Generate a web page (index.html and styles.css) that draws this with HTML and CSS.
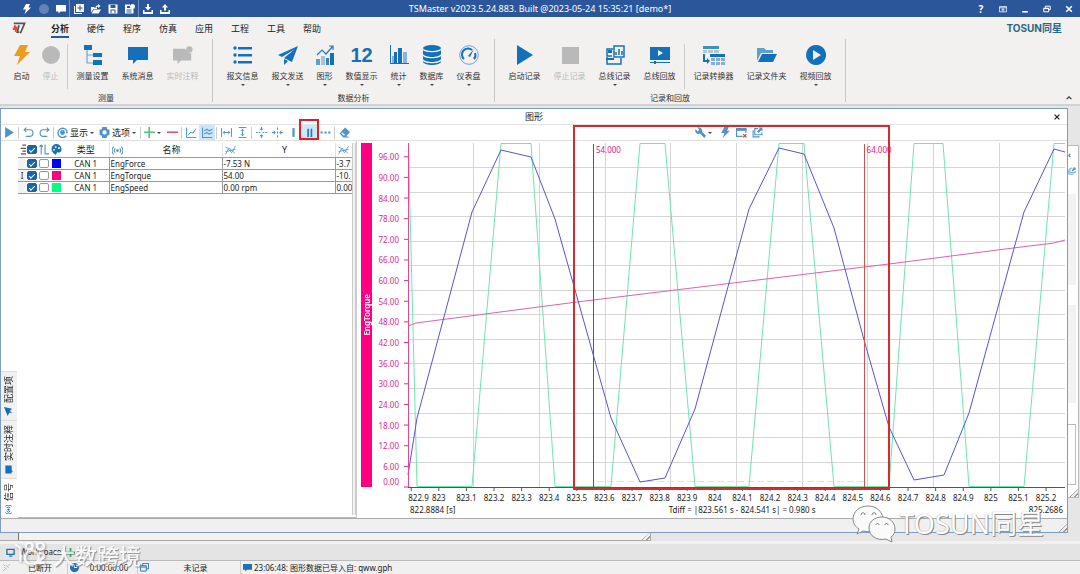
FILE: index.html
```html
<!DOCTYPE html>
<html lang="zh-CN">
<head>
<meta charset="utf-8">
<title>TSMaster</title>
<link rel="stylesheet" href="styles.css">
</head>
<body>
<svg class="defs" aria-hidden="true">
  <symbol id="bolt" viewBox="0 0 20 20"><path d="M8 0h8l-3 7h5L5 20l3-9H2z"/></symbol>
  <symbol id="chat" viewBox="0 0 20 20"><path d="M0 2h20v13H9l-4 4v-4H0z"/></symbol>
  <symbol id="play" viewBox="0 0 20 20"><path d="M2 0l16 10L2 20z"/></symbol>
  <symbol id="gear" viewBox="0 0 20 20"><path fill-rule="evenodd" d="M6 0h8l1 4 4 1v9l-4 2-1 4H6l-1-4-4-2V5l4-1zM10 6a4 4 0 1 0 .1 0z"/></symbol>
  <symbol id="popout" viewBox="0 0 20 20"><path fill="none" stroke="currentColor" stroke-width="2" d="M11 3H5v11h13v-4M2 6v12h12"/><path d="M12 1h7v7l-2-2-5 5-3-3 5-5z"/></symbol>
</svg>

<div class="app">
  <header class="titlebar">
    <div class="quick">
      <button aria-label="启动"><svg viewBox="0 0 20 20"><use href="#bolt"/></svg></button>
      <button aria-label="停止" class="dim"><svg viewBox="0 0 20 20"><circle cx="10" cy="10" r="10"/></svg></button>
      <button aria-label="消息"><svg viewBox="0 0 20 20"><use href="#chat"/></svg></button>
      <i></i>
      <button aria-label="新建"><svg viewBox="0 0 20 20"><path fill-rule="evenodd" d="M4 0h16v16H4zM11 3v4H7v2h4v4h2V9h4V7h-4V3z"/><path d="M0 4h2v14h14v2H0z"/></svg></button>
      <button aria-label="打开"><svg viewBox="0 0 20 20"><path d="M0 6h6l2 2h4v2H5l-5 7z"/><path d="M6 11h14l-5 8H1zM9 8c0-4 2-5 5-5V0l5 4-5 4V5c-2 0-3 1-3 3z"/></svg></button>
      <button aria-label="保存"><svg viewBox="0 0 20 20"><path fill-rule="evenodd" d="M1 1h18v18H1zM5 2v6h10V2zM5 11v7h2v-5h6v5h2v-7z"/></svg></button>
      <button aria-label="另存为"><svg viewBox="0 0 20 20"><path fill-rule="evenodd" d="M0 1h10v3H4v4h8l5 3v8H0zM3 11v2h10v-2zM3 15v2h10v-2z"/><circle cx="15" cy="5" r="5"/></svg></button>
      <i></i>
      <button aria-label="导入"><svg viewBox="0 0 20 20"><path d="M8 0h4v6h4l-6 7-6-7h4zM0 12h3v4h14v-4h3v8H0z"/></svg></button>
      <button aria-label="导出"><svg viewBox="0 0 20 20"><path d="M8 13h4V7h4l-6-7-6 7h4zM0 12h3v4h14v-4h3v8H0z"/></svg></button>
    </div>
    <h1>TSMaster v2023.5.24.883. Built @2023-05-24 15:35:21 [demo*]</h1>
    <div class="winctl">
      <button aria-label="帮助"><b>?</b></button>
      <button aria-label="功能区"><svg viewBox="0 0 20 20"><path fill="none" stroke="currentColor" stroke-width="2" d="M1 4h18v13H1zM1 7h18M10 8v8M6 12h8"/></svg></button>
      <button aria-label="最小化"><svg viewBox="0 0 20 20"><path d="M3 15h14v4H3z"/></svg></button>
      <button aria-label="还原"><svg viewBox="0 0 20 20"><path fill="none" stroke="currentColor" stroke-width="2.5" d="M6 7V3h12v9h-4M2 8h12v9H2zM2 9h12"/></svg></button>
      <button aria-label="关闭"><svg viewBox="0 0 20 20"><path fill="none" stroke="currentColor" stroke-width="4" d="M3 3l14 14M17 3L3 17"/></svg></button>
    </div>
  </header>

  <nav class="tabs">
    <svg class="mark" viewBox="0 0 40 34"><path fill="none" stroke="#555" stroke-width="5" d="M5 4h31L24 32M20 9l-5 20h6"/><path fill="none" stroke="#e0492e" stroke-width="5" d="M9 9L7 15h8M2 20h10l-2 8"/></svg>
    <a href="#" class="on">分析</a><a href="#">硬件</a><a href="#">程序</a><a href="#">仿真</a><a href="#">应用</a><a href="#">工程</a><a href="#">工具</a><a href="#">帮助</a>
    <span class="brand">TOSUN同星</span>
  </nav>

  <div class="ribbon">
    <section class="group g1">
      <div class="tools">
        <button class="t s"><svg class="orange" viewBox="0 0 20 20"><use href="#bolt"/></svg>启动</button>
        <button class="t s off"><svg viewBox="0 0 20 20"><circle cx="10" cy="10" r="9"/></svg>停止</button>
        <i class="bar"></i>
        <button class="t"><svg viewBox="0 0 20 20"><path d="M1 0h8v5H1zM10 8h9v4h-9zM10 15h9v5h-9z"/><path fill="none" stroke="#6aa7d2" stroke-width="1.2" d="M4 5v13h6M4 10h6"/></svg>测量设置</button>
        <button class="t"><svg viewBox="0 0 20 20"><use href="#chat"/></svg>系统消息</button>
        <button class="t off"><svg viewBox="0 0 22 20"><path d="M0 3h13l5 5h2v8H9l-4 4v-4H0z"/><circle cx="18" cy="4" r="3.5"/></svg>实时注释</button>
      </div>
      <h2>测量</h2>
    </section>
    <section class="group g2">
      <div class="tools">
        <button class="t drop"><svg viewBox="0 0 20 20"><path d="M5 2h14v2.500H5zM5 9h14v2.500H5zM5 16h14v2.500H5z"/><circle cx="2" cy="3" r="1.700"/><circle cx="2" cy="10" r="1.700"/><circle cx="2" cy="17" r="1.700"/></svg>报文信息</button>
        <button class="t drop"><svg viewBox="0 0 20 20"><path d="M20 1L0 10l4 2L17 4 6 13l8 4zM6 14v6l4-4z"/></svg>报文发送</button>
        <button class="t s drop"><svg viewBox="0 0 20 20"><path d="M15 8h4v12h-4z"/><path fill="#5aa3c4" d="M1 14h4v6H1z"/><path fill="#a5c2df" d="M6 11h4v9H6z"/><path fill="#3f80bd" d="M11 13h3v7h-3z"/><path fill="none" stroke="#2878bd" stroke-width="1.200" d="M2 10l5-5 4 4 7-8M14 1h4v4"/></svg>图形</button>
        <button class="t drop"><b class="num">12</b>数值显示</button>
        <button class="t s drop"><svg viewBox="0 0 20 20"><path d="M5 7h3v11H5zM9 3h4v15H9z"/><path fill="#87b4da" d="M14 7h4v11h-4zM3 11h2v7H3z"/><path d="M1 0h1v18h18v1H1z"/></svg>统计</button>
        <button class="t m drop"><svg viewBox="0 0 20 20"><ellipse cx="10" cy="3" rx="9" ry="3"/><path d="M1 5c2 3 16 3 18 0v4c-2 4-16 4-18 0zM1 11c2 3 16 3 18 0v3c-2 4-16 4-18 0zM1 16c2 3 16 3 18 0v1c-2 4-16 4-18 0z"/></svg>数据库</button>
        <button class="t m drop"><svg viewBox="0 0 20 20"><circle cx="10" cy="10" r="9.300" fill="none" stroke="#6ba3d3"/><path fill="none" stroke="#1470b8" stroke-width="2" d="M5 14a6 6 0 0 1 8-9M16 8a6 6 0 0 1-1 6"/><path d="M15 4l-4 8-2-1z"/></svg>仪表盘</button>
      </div>
      <h2>数据分析</h2>
    </section>
    <section class="group g3">
      <div class="tools">
        <button class="t"><svg viewBox="0 0 20 20"><use href="#play"/></svg>启动记录</button>
        <button class="t off"><svg viewBox="0 0 20 20"><path d="M2 2h17v17H2z"/></svg>停止记录</button>
        <button class="t drop"><svg viewBox="0 0 20 20"><path fill="none" stroke="#1470b8" stroke-width="1.500" d="M9 1h10v11H9zM8 4H2v7h5M2 12v7h14v-6M11 10V7M14 10V4M17 10V6"/><path d="M3 5h4v3H3zM1 13h8v2H1z"/></svg>总线记录</button>
        <button class="t"><svg viewBox="0 0 20 20"><path fill-rule="evenodd" d="M0 2h20v13H0zM8 5v6l5-3z"/><path d="M0 17h4v-1h2v1h14v1H6v1H4v-1H0z"/></svg>总线回放</button>
        <i class="bar"></i>
        <button class="t l"><svg class="wide" viewBox="0 0 22 20"><path fill="#3d94b8" d="M0 1h16v3H0z"/><path fill="#b8c6d2" d="M0 5h4v3H0zM5 5h5v3H5zM11 5h5v3h-5z"/><path d="M7 9h15v3H7zM1 9h1v6h2v-2l3 3-3 3v-2H0V9z"/><path fill="#87acd5" d="M8 13h4v3H8zM13 13h4v3h-4zM18 13h4v3h-4zM8 17h4v3H8zM13 17h4v3h-4zM18 17h4v3h-4z"/></svg>记录转换器</button>
        <button class="t l"><svg viewBox="0 0 20 20"><path fill="#5ca2c9" d="M0 3h7l2 2h7v3H4l-4 8z"/><path d="M5 9h15l-4 8H1z"/></svg>记录文件夹</button>
        <button class="t drop"><svg viewBox="0 0 20 20"><path fill-rule="evenodd" d="M10 0a10 10 0 1 0 .1 0zM7 5l8 5-8 5z"/></svg>视频回放</button>
      </div>
      <h2>记录和回放</h2>
    </section>
    <button class="fold" aria-label="折叠"><svg viewBox="0 0 10 10"><path fill="none" stroke="currentColor" stroke-width="2" d="M1 7l4-4 4 4"/></svg></button>
  </div>

  <main class="mdi">
    <section class="window">
      <div class="wtitle"><span>图形</span><button aria-label="关闭"><svg viewBox="0 0 10 10"><path fill="none" stroke="currentColor" stroke-width="2" d="M1 1l8 8M9 1L1 9"/></svg></button></div>
      <div class="toolbar">
        <div class="left">
          <button aria-label="运行"><svg viewBox="0 0 20 20"><use href="#play"/></svg></button><i></i>
          <button aria-label="撤销"><svg viewBox="0 0 20 20"><path fill="none" stroke="currentColor" stroke-width="2" d="M6 1L2 5l4 4M2 5h11a5 6 0 0 1 0 12H5"/></svg></button>
          <button aria-label="重做"><svg viewBox="0 0 20 20"><path fill="none" stroke="currentColor" stroke-width="2" d="M14 1l4 4-4 4M18 5H7a5 6 0 0 0 0 12h8"/></svg></button><i></i>
          <button class="menu"><svg viewBox="0 0 20 20"><path fill="none" stroke="currentColor" stroke-width="2.5" d="M17 16a8.500 8.500 0 1 1 1-9v5"/><circle cx="10" cy="10" r="4.500"/></svg>显示</button>
          <button class="menu"><svg viewBox="0 0 20 20"><use href="#gear"/></svg>选项</button><i></i>
          <button class="menu green" aria-label="添加"><svg viewBox="0 0 20 20"><path d="M8 0h3v8h9v3h-9v9H8v-9H0V8h8z"/></svg></button>
          <button class="red" aria-label="移除"><svg viewBox="0 0 20 20"><path d="M0 8h20v3H0z"/></svg></button><i></i>
          <button aria-label="单轴"><svg viewBox="0 0 20 20"><path fill="none" stroke="currentColor" stroke-width="1.800" d="M1 1v18h18M4 15l4-5 5 1 5-8"/></svg></button>
          <button class="sel" aria-label="多轴"><svg viewBox="0 0 20 20"><path fill="none" stroke="currentColor" stroke-width="2" d="M1 1v18h18M4 7l5-3 4 3 6-3M4 13l5-3 4 3 6-3"/></svg></button><i></i>
          <button aria-label="横向适应"><svg viewBox="0 0 20 20"><path fill="none" stroke="currentColor" stroke-width="1.800" d="M1 2v16M19 2v16M4 10h12M7 7l-3 3 3 3M13 7l3 3-3 3"/></svg></button>
          <button aria-label="纵向适应"><svg viewBox="0 0 20 20"><path fill="none" stroke="currentColor" stroke-width="1.800" d="M3 1h14M3 19h14M10 4v12M7 7l3-3 3 3M7 13l3 3 3-3"/></svg></button><i></i>
          <button aria-label="纵向压缩"><svg viewBox="0 0 20 20"><path d="M0 9h3v2H0zM5 9h3v2H5zM12 9h3v2h-3zM17 9h3v2h-3zM9 0h2v3h3l-4 4-4-4h3zM9 20h2v-3h3l-4-4-4 4h3z"/></svg></button>
          <button aria-label="横向压缩"><svg viewBox="0 0 20 20"><path d="M9 1h2v4H9zM9 8h2v4H9zM9 15h2v4H9zM0 9h3V6l4 4-4 4v-3H0zM20 9h-3V6l-4 4 4 4v-3h3z"/></svg></button>
          <button aria-label="单光标"><svg viewBox="0 0 20 20"><path d="M8 2h4v16H8z"/></svg></button>
          <button class="sel marked" aria-label="双光标"><svg viewBox="0 0 20 20"><path d="M6 3h3v15H6zM12 3h3v15h-3z"/></svg></button>
          <button aria-label="更多"><svg viewBox="0 0 20 20"><path d="M1 8h4v4H1zM8 8h4v4H8zM15 8h4v4h-4z"/></svg></button><i></i>
          <button aria-label="清除"><svg viewBox="0 0 20 20"><path d="M11 1l9 8-7 8 6 1v1H8L1 12zM4 12l5 4 2-2-5-4z"/></svg></button>
        </div>
        <div class="right">
          <button class="menu" aria-label="设置"><svg viewBox="0 0 20 20"><path d="M4 1a7 7 0 0 1 9 8l7 7-3 4-8-8A6 6 0 0 1 1 4l4 4 3-3z"/></svg></button>
          <button aria-label="触发"><svg viewBox="0 0 20 20"><use href="#bolt"/></svg></button>
          <button aria-label="关闭视图"><svg viewBox="0 0 20 20"><path fill="none" stroke="currentColor" stroke-width="2" d="M12 17H1V3h17v8"/><path d="M1 2h18v5H1z"/><path fill="none" stroke="#d33" stroke-width="2" d="M13 13l6 6M19 13l-6 6"/></svg></button>
          <button aria-label="弹出"><svg viewBox="0 0 20 20"><use href="#popout"/></svg></button>
        </div>
      </div>

      <div class="content">
        <aside class="side">
          <a href="#"><svg viewBox="0 0 20 20"><path d="M0 8l20-8-4 18-5-5-4 6V12z"/></svg>配置项</a>
          <a href="#"><svg viewBox="0 0 20 20"><path d="M1 3h18v14H9l-4 3v-3H1z"/></svg>实时注释</a>
          <a href="#" class="cur"><svg viewBox="0 0 20 20"><use href="#wave"/></svg>信号</a>
        </aside>
        <div class="signals">
          <table>
            <colgroup><col class="c1"><col class="c2"><col class="c2"><col class="c2"><col class="c3"><col class="c4"><col class="c4"><col></colgroup>
            <thead><tr>
              <th><svg viewBox="0 0 20 20"><path fill="#555" d="M8 1h8v2H8zM5 7h11v2H5zM8 12h8v2H8zM5 17h11v2H5z"/></svg></th>
              <th><input type="checkbox" checked aria-label="全选"></th>
              <th><svg viewBox="0 0 20 20"><path fill="none" stroke="currentColor" stroke-width="2" d="M4 19V2M1 5l3-3 3 3M11 1v17h7"/></svg></th>
              <th><svg class="deep" viewBox="0 0 20 20"><path fill-rule="evenodd" d="M10 0a9 9 0 0 0-9 9c0 6 5 9 8 11l2-5c7 2 9-3 8-7-1-5-5-8-9-8zM7 4h3v3H7zM13 6h3v3h-3zM4 9h3v3H4z"/></svg></th>
              <th>类型</th>
              <th class="named"><svg class="lead" viewBox="0 0 20 20"><g id="wave"><circle cx="10" cy="10" r="2.500"/><path fill="none" stroke="currentColor" stroke-width="2" d="M6 6a6 6 0 0 0 0 8M14 6a6 6 0 0 1 0 8M3 3a10 10 0 0 0 0 14M17 3a10 10 0 0 1 0 14"/></g></svg>名称</th>
              <th class="named"><svg class="lead" viewBox="0 0 20 20"><g id="curve"><path fill="none" stroke="currentColor" stroke-width="1.500" d="M1 17L6 7l6 7 7-12M1 4l8 3 9 8M1 12l18-4"/></g></svg>Y</th>
              <th><svg class="lead" viewBox="0 0 20 20"><use href="#curve"/></svg></th>
            </tr></thead>
            <tbody>
              <tr><td></td><td><input type="checkbox" checked aria-label="显示 EngForce"></td><td><input type="checkbox" aria-label="独立轴 EngForce"></td><td><span class="sw blue"></span></td><td>CAN 1</td><td>EngForce</td><td>-7.53 N</td><td>-3.7</td></tr>
              <tr><td>I</td><td><input type="checkbox" checked aria-label="显示 EngTorque"></td><td><input type="checkbox" aria-label="独立轴 EngTorque"></td><td><span class="sw pink"></span></td><td>CAN 1</td><td>EngTorque</td><td>54.00</td><td>-10.</td></tr>
              <tr><td></td><td><input type="checkbox" checked aria-label="显示 EngSpeed"></td><td><input type="checkbox" aria-label="独立轴 EngSpeed"></td><td><span class="sw mint"></span></td><td>CAN 1</td><td>EngSpeed</td><td>0.00 rpm</td><td>0.00</td></tr>
            </tbody>
          </table>
          <i class="scroll"></i>
        </div>
        <div class="chart">
          <div class="axisname"><span>EngTorque</span></div>
          <svg class="yaxis" id="yaxis"></svg>
          <div class="plot">
            <svg viewBox="408 143 657 344" preserveAspectRatio="none">
              <path class="grid" d="M473.500 143V487M539.500 143V487M605.500 143V487M670.500 143V487M736.500 143V487M802.500 143V487M867.500 143V487M933.500 143V487M999.500 143V487M408 167.500H1065M408 192.500H1065M408 216.500H1065M408 241.500H1065M408 265.500H1065M408 290.500H1065M408 314.500H1065M408 339.500H1065M408 363.500H1065M408 388.500H1065M408 413.500H1065M408 437.500H1065M408 462.500H1065"/>
              <path class="diff" d="M597 481.500H864"/>
              <path class="axis" d="M408 487.500H1065"/>
              <polyline class="speed" points="408.500,143 410,210 417,486.500 472,486.500 501,143.500 531,143.500 555,486.500 611,486.500 640,143.500 665,143.500 695,486.500 749,486.500 779,143.500 804,143.500 834,486.500 889,486.500 914,143.500 943,143.500 969,486.500 1024,486.500 1054,143.500 1065,143.500"/>
              <polyline class="torque" points="408,326 416,323 577,302 889,264 1013,248 1054,243 1065,240"/>
              <polyline class="force" points="408,475 417,418 472,212 501,150 531,157 555,219 577,297 611,418 640,482 665,478 695,409 749,209 779,148 804,154 834,228 864,340 889,427 914,480 944,475 969,413 1024,212 1054,149 1065,152"/>
              <path class="ca" d="M593.500 144V487"/><path class="cb" d="M864.500 144V487"/>
              <path class="ya" d="M408.500 143V487"/>
            </svg>
            <span class="tag a">54.000</span><span class="tag b">64.000</span>
            <div class="focus"></div>
          </div>
          <svg class="xaxis" id="xaxis"></svg>
          <div class="range"><span>822.8884 [s]</span><span>Tdiff = |823.561 s - 824.541 s| = 0.980 s</span><span>825.2686</span></div>
        </div>
      </div>
      <div class="wfoot"><i class="grip"></i></div>
    </section>
    <div class="behind-r">
      <div class="card"><b>‹</b><svg viewBox="0 0 20 20"><use href="#popout"/></svg><i class="g one"></i><i class="g two"></i><i class="box"></i><i class="grip"></i></div>
    </div>
    <div class="behind-b"><i class="grip"></i></div>
  </main>

  <footer>
    <div class="work"><svg viewBox="0 0 20 20"><path fill="none" stroke="currentColor" stroke-width="3" d="M2 3h16v11H2zM7 18h7"/></svg><span>Workspace</span><button aria-label="添加工作区"><svg viewBox="0 0 20 20"><path d="M8 0h4v8h8v4h-8v8H8v-8H0V8h8z"/></svg></button></div>
    <div class="status">
      <span class="s1"><svg class="faint" viewBox="0 0 20 20"><path fill="none" stroke="currentColor" stroke-width="2" d="M2 18l6-6M11 9l7-7M5 9l6 6M9 5l6 6M3 3l4 4"/></svg><em>已断开</em></span>
      <span class="s2"><svg viewBox="0 0 20 20"><path fill-rule="evenodd" d="M10 0a10 10 0 1 0 .1 0zM9 4v7h7V9h-5V4z"/></svg><em>0:00:00:00</em></span>
      <span class="s3"><svg viewBox="0 0 20 20"><path fill="none" stroke="currentColor" stroke-width="2" d="M6 6V1h13v12h-4M1 6h13v12H1zM1 9h13"/></svg><em>未记录</em></span>
      <span class="s4"><svg viewBox="0 0 20 20"><use href="#chat"/></svg>23:06:48: 图形数据已导入自: qww.gph</span>
    </div>
  </footer>

  <div class="wm corner"><svg viewBox="0 0 40 30"><g fill="none" stroke="#fff" stroke-width="3"><path d="M3 4l6 4v16"/><circle cx="22" cy="19" r="8"/><circle cx="19" cy="6" r="4"/><circle cx="32" cy="6" r="4"/><path d="M30 15c5-3 9 2 3 6l-4 4h8"/></g></svg>大数跨境</div>
  <div class="wm chatmark"><svg viewBox="0 0 44 38"><g fill="#fafafa" stroke="#888"><path d="M16 1C7 1 1 7 1 14c0 5 3 8 6 10l-2 5 6-3c12 3 21-4 20-13C30 6 24 1 16 1z"/><path d="M30 12c-8 0-13 5-13 11 0 8 8 13 17 11l6 3-1-5c3-2 4-5 4-8 0-7-6-12-13-12z"/></g><g fill="none" stroke="#777"><path d="M9 10c0-3 4-3 4 0M20 10c0-3 4-3 4 0M24 20c0-2 3-2 3 0M33 20c0-2 3-2 3 0"/></g></svg>TOSUN同星</div>
</div>
<script src="chart.js"></script>
</body>
</html>
```

FILE: styles.css
```css
* { box-sizing: border-box; }
body, h1, h2 { margin: 0; font-weight: 400; }
body { font: 8px/12px "Noto Sans", "Noto Sans CJK SC", sans-serif; color: #222; background: #e6e6e6; }
button { font: inherit; color: inherit; border: 0; padding: 0; background: none; display: flex; align-items: center; justify-content: center; }
a { color: inherit; text-decoration: none; }
svg { fill: currentColor; flex: none; }
.defs { position: absolute; width: 0; height: 0; }
.app { position: relative; display: flex; flex-direction: column; height: 100vh; min-height: 560px; overflow: hidden; }

.titlebar { display: grid; grid-template-columns: 1fr auto 1fr; align-items: center; height: 17px; background: #2b579a; color: #fff; }
.titlebar h1 { font-size: 9px; }
.titlebar svg { width: 10px; height: 10px; }
.quick { display: flex; align-items: center; padding-left: 18px; }
.quick button { width: 17px; height: 17px; }
.quick .dim { color: #6283b6; }
.quick i { width: 1px; height: 17px; background: #6d8cba; }
.winctl { display: flex; justify-content: flex-end; }
.winctl button { width: 22px; height: 17px; }
.winctl svg { width: 8px; height: 8px; }
.winctl b { font-size: 10px; }

.tabs { display: flex; align-items: center; height: 22px; padding-right: 18px; background: #f2f1f0; font-size: 9px; }
.mark { width: 14px; height: 12px; margin: 0 16px 0 12px; }
.tabs a { width: 36px; height: 20px; padding-top: 5px; text-align: center; }
.tabs .on { font-weight: 700; color: #222; }
.tabs .on::after { content: ""; display: block; width: 18px; height: 2px; margin: 1px auto 0; background: #2b579a; }
.brand { margin-left: auto; font: 700 10px/12px Inter, "Noto Sans CJK SC", sans-serif; color: #2a6788; }

.ribbon { display: flex; height: 67px; background: #f2f1f0; border-bottom: 2px solid #d2d2d2; color: #333; }
.group { display: flex; flex-direction: column; border-right: 1px solid #c6c6c6; height: 63px; }
.tools { display: flex; padding: 5px 7px 0; height: 54px; }
.group h2 { text-align: center; font-size: 8px; line-height: 12px; }
.t { width: 45px; flex-direction: column; justify-content: flex-start; gap: 4px; height: 48px; white-space: nowrap; }
.t svg, .num { width: 20px; height: 22px; color: #1470b8; }
.t .wide { width: 22px; }
.t .orange { color: #ef9b20; }
.t.off, .t.off svg { color: #b9b9b9; }
.num { width: 24px; font: 700 20px/22px "Liberation Sans", sans-serif; text-align: center; }
.t.s { width: 29px; }
.t.m { width: 37px; }
.t.l { width: 53px; }
.bar { width: 1px; height: 45px; margin: 0 2px; background: #ccc; }
.drop::after, .menu::after { content: ""; border: 2px solid transparent; border-top-color: #444; border-bottom: 0; }
.drop::after { margin-top: -2px; }
.fold { margin: auto 8px 2px auto; }
.fold svg { width: 6px; height: 8px; }

.mdi { flex: 1; display: grid; grid-template: 1fr 8px / 1fr 12px; padding-top: 2px; border-bottom: 3px solid #f1f1f1; min-height: 0; }
.window { display: flex; flex-direction: column; min-width: 0; min-height: 0; background: #fff; border: 1px solid #7e9cc0; }
.wtitle { display: flex; align-items: center; height: 16px; padding-left: 20px; border-bottom: 1px solid #e4e4e4; font-size: 9px; }
.wtitle span { flex: 1; text-align: center; }
.wtitle button { width: 20px; }
.wtitle svg { width: 6px; height: 6px; }
.toolbar { display: flex; height: 16px; border-bottom: 1px solid #e0e0e0; color: #4d94cc; }
.toolbar svg { width: 11px; height: 11px; }
.toolbar .left { width: 356px; display: flex; align-items: center; }
.toolbar .right { flex: 1; display: flex; align-items: center; justify-content: center; gap: 5px; padding-left: 32px; }
.left button { width: 16px; height: 15px; }
.left i { width: 1px; height: 12px; margin: 0 1px; background: #ccc; }
.toolbar .menu { width: auto; gap: 2px; padding: 0 3px 0 2px; color: #222; font-size: 9px; }
.menu svg { color: #4d94cc; }
.menu.green svg { color: #52c284; }
.toolbar .red { color: #e2576a; }
.toolbar .sel { background: #cde6f9; }
.toolbar .marked { position: relative; color: #2577b8; }
.marked::after { content: ""; position: absolute; inset: -6px -2px 0 -2px; border: 2px solid #e02026; }

.content { flex: 1; display: flex; min-height: 0; }
.side { width: 17px; display: flex; flex-direction: column; justify-content: flex-end; }
.side a { display: flex; align-items: center; gap: 4px; width: 16px; padding: 4px 0; writing-mode: vertical-rl; text-orientation: sideways; transform: rotate(180deg); background: #f1f1f1; border-bottom: 1px solid #ddd; font-size: 9px; line-height: 14px; }
.side .cur { background: #fff; }
.side svg { width: 9px; height: 9px; color: #1470b8; transform: rotate(90deg); }
.signals { display: flex; width: 338px; padding: 2px 0; border-bottom: 1px solid #bbb; }
table { flex: 1; width: 0; table-layout: fixed; border-collapse: collapse; align-self: flex-start; }
.c1 { width: 8px; } .c2 { width: 12px; } .c3 { width: 47px; } .c4 { width: 113px; }
th, td { padding: 0 0 0 1px; overflow: hidden; white-space: nowrap; font-weight: 400; border: 0 solid #999; }
th { height: 14px; line-height: 13px; font-size: 9px; position: relative; border-bottom-width: 1px; border-right: 1px solid #e2e2e2; }
td { height: 12px; line-height: 11px; border-width: 0 1px 1px 0; }
td:last-child, th:last-child { border-right: 0; }
th:nth-child(-n+4), td:nth-child(-n+4) { padding: 0; text-align: center; border-right: 0; }
td:nth-child(5) { text-align: center; }
td:first-child { background: #f3f3f3; }
.named { padding-left: 12px; }
th svg { width: 11px; height: 11px; color: #5495c8; display: block; margin: auto; }
th .deep { color: #1b70b4; }
th .lead { position: absolute; left: 2px; top: 2px; }
input { appearance: none; display: block; width: 10px; height: 9px; margin: auto; border: 1px solid #999; border-radius: 2px; background: #fff; }
input:checked { background: #1764ac; border-color: #1764ac; }
input:checked::after { content: ""; display: block; width: 5px; height: 2px; margin: 2px 1px; border: solid #fff; border-width: 0 0 1px 1px; transform: rotate(-45deg); }
.sw { display: block; width: 9px; height: 9px; margin: auto; }
.blue { background: #00f; } .pink { background: #ff0080; } .mint { background: #00ff80; }
.scroll { width: 4px; border: solid #ccc; border-width: 0 1px; background: #f0f0f0; }

.chart { flex: 1; min-width: 0; display: grid; grid-template: 1fr 17px 14px / 11px 36px 1fr; padding: 2px 2px 0 4px; border-left: 1px solid #ccc; }
.axisname { background: #ff0080; color: #fff; display: flex; align-items: center; justify-content: center; font-weight: 600; }
.axisname span { writing-mode: vertical-rl; transform: rotate(180deg); line-height: 11px; }
.yaxis, .xaxis, .plot > svg { width: 100%; height: 100%; display: block; overflow: visible; }
.yaxis { fill: #e0288c; stroke: none; }
.yaxis line { stroke: #e0288c; }
.xaxis { grid-column: 3; fill: #222; }
.xaxis line { stroke: #555; }
.yaxis text { text-anchor: end; dominant-baseline: central; }
.xaxis text { text-anchor: middle; }
.plot { position: relative; min-height: 0; }
.plot path, .plot polyline { fill: none; vector-effect: non-scaling-stroke; }
.grid { stroke: #d6d6d6; } .diff { stroke: #eeee80; stroke-dasharray: 7 3; } .axis { stroke: #555; }
.speed { stroke: #6ee6ac; } .torque { stroke: #e060a8; } .force { stroke: #5656d0; }
.ca { stroke: #5050a8; } .cb { stroke: #d05050; } .ya { stroke: #e0489c; }
.tag { position: absolute; top: 1px; color: #e0187c; }
.tag.a { left: 28.6%; } .tag.b { left: 69.8%; }
.focus { position: absolute; left: 25.1%; right: 26.7%; top: -18px; bottom: -3px; border: 2px solid #d62a30; }
.range { grid-column: 3; display: flex; justify-content: space-between; padding: 0 2px; line-height: 12px; }
.wfoot { display: flex; justify-content: flex-end; align-items: flex-end; height: 14px; background: #f0f0f0; border-top: 1px solid #aaa; }
.grip { width: 9px; height: 8px; background: repeating-linear-gradient(135deg, #999 0 1px, #eee 1px 3px); clip-path: polygon(100% 0, 100% 100%, 0 100%); }
.behind-r { padding: 37px 1px 0 0; margin-bottom: 35px; }
.card { height: 100%; display: flex; flex-direction: column; background: #fff; border: 1px solid #bbb; border-left: 0; color: #4d94cc; overflow: hidden; }
.card b { height: 18px; padding-top: 3px; color: #666; }
.card svg { width: 8px; height: 14px; }
.card .g { background: #f2f2f2; width: 8px; margin-top: 16px; }
.card .one { height: 91px; } .card .two { height: 98px; margin-top: 20px; }
.card .box { flex: 1; margin-top: 21px; border: solid #bbb; border-width: 1px 1px 1px 0; width: 8px; }
.card .grip { margin: 4px 0 0 1px; }
.behind-b { grid-column: 1; display: flex; align-items: flex-end; justify-content: flex-end; width: 61%; background: #f3f3f3; border: solid #aaa; border-width: 0 1px 1px 0; }
.behind-b::before { content: ""; width: 18px; height: 100%; margin-right: auto; background: #e6e6e6; border-right: 1px solid #777; }

footer svg { width: 9px; height: 9px; color: #1f70b4; }
.work { display: flex; align-items: center; gap: 5px; height: 17px; padding-left: 6px; background: #e4e4e4; border-bottom: 1px solid #bbb; }
.work button svg { color: #2eac70; }
.status { display: flex; height: 13px; background: #f0f0f0; }
.status span { display: flex; align-items: center; gap: 2px; border-right: 1px solid #ccc; padding-left: 2px; }
.status em { flex: 1; text-align: center; font-style: normal; }
.s1 { width: 68px; } .s2 { width: 70px; } .s3 { width: 103px; } .status .s4 { flex: 1; border: 0; }
.status .faint { color: #9cbfdd; }

.wm { position: absolute; display: flex; align-items: center; white-space: nowrap; color: #fff; pointer-events: none; }
.wm.corner { left: 10px; bottom: 7px; gap: 3px; opacity: .75; font: 500 22px/26px "Noto Sans CJK SC", sans-serif; text-shadow: 1px 1px 1px #777; }
.wm.corner svg { width: 40px; height: 26px; filter: drop-shadow(1px 1px 1px #888); }
.chatmark { right: 36px; bottom: 31px; gap: 3px; font: 27px/38px "Noto Sans", "Noto Sans CJK SC", sans-serif; text-shadow: 1px 1px 0 #888, 0 0 1px #888; }
.chatmark svg { width: 44px; height: 38px; }
```

FILE: chart.js
```js
const NS = "http://www.w3.org/2000/svg";
const add = (parent, tag, attrs, text) => {
  const el = document.createElementNS(NS, tag);
  for (const key in attrs) el.setAttribute(key, attrs[key]);
  if (text) el.textContent = text;
  parent.append(el);
};

const y = document.getElementById("yaxis");
for (let v = 0; v <= 96; v += 6) {
  const at = 100 - v + "%";
  add(y, "line", { x1: "89%", x2: "100%", y1: at, y2: at });
  add(y, "text", { x: "75%", y: v ? at : "98.5%" }, v.toFixed(2));
}

const start = 822.8884, end = 825.2686;
const x = document.getElementById("xaxis");
for (let i = 0; i < 24; i++) {
  const t = 822.9 + i / 10;
  const at = (t - start) / (end - start) * 100;
  add(x, "line", { x1: at + "%", x2: at + "%", y1: 0, y2: 4 });
  add(x, "text", { x: Math.max(at, 1.6) + "%", y: 14 }, String(+t.toFixed(1)));
}
```
